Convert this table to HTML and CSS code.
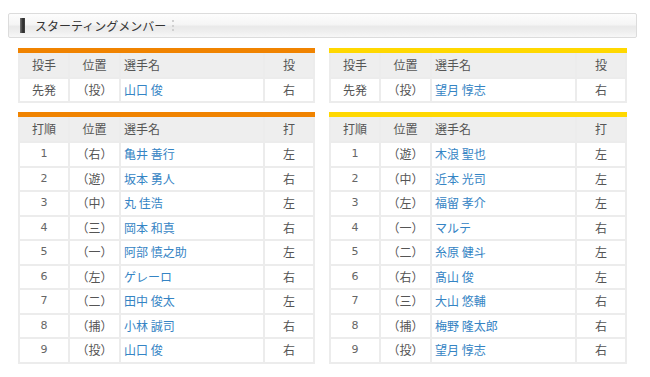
FILE: index.html
```
<!DOCTYPE html>
<html lang="ja">
<head>
<meta charset="utf-8">
<link rel="stylesheet" href="styles.css">
</head>
<body>
<div class="title-bar"><span class="mark"></span><span class="title">スターティングメンバー</span><span class="sep"></span></div>
<div class="grid">
  <table class="tbl orange">
    <tr><th class="c1">投手</th><th class="c2">位置</th><th class="c3">選手名</th><th class="c4">投</th></tr>
    <tr><td>先発</td><td>（投）</td><td class="nm">山口 俊</td><td>右</td></tr>
  </table>
  <table class="tbl yellow">
    <tr><th class="c1">投手</th><th class="c2">位置</th><th class="c3">選手名</th><th class="c4">投</th></tr>
    <tr><td>先発</td><td>（投）</td><td class="nm">望月 惇志</td><td>右</td></tr>
  </table>
  <table class="tbl orange lineup">
    <tr><th class="c1">打順</th><th class="c2">位置</th><th class="c3">選手名</th><th class="c4">打</th></tr>
    <tr><td class="num">1</td><td>（右）</td><td class="nm">亀井 善行</td><td>左</td></tr>
    <tr><td class="num">2</td><td>（遊）</td><td class="nm">坂本 勇人</td><td>右</td></tr>
    <tr><td class="num">3</td><td>（中）</td><td class="nm">丸 佳浩</td><td>左</td></tr>
    <tr><td class="num">4</td><td>（三）</td><td class="nm">岡本 和真</td><td>右</td></tr>
    <tr><td class="num">5</td><td>（一）</td><td class="nm">阿部 慎之助</td><td>左</td></tr>
    <tr><td class="num">6</td><td>（左）</td><td class="nm">ゲレーロ</td><td>右</td></tr>
    <tr><td class="num">7</td><td>（二）</td><td class="nm">田中 俊太</td><td>左</td></tr>
    <tr><td class="num">8</td><td>（捕）</td><td class="nm">小林 誠司</td><td>右</td></tr>
    <tr><td class="num">9</td><td>（投）</td><td class="nm">山口 俊</td><td>右</td></tr>
  </table>
  <table class="tbl yellow lineup">
    <tr><th class="c1">打順</th><th class="c2">位置</th><th class="c3">選手名</th><th class="c4">打</th></tr>
    <tr><td class="num">1</td><td>（遊）</td><td class="nm">木浪 聖也</td><td>左</td></tr>
    <tr><td class="num">2</td><td>（中）</td><td class="nm">近本 光司</td><td>左</td></tr>
    <tr><td class="num">3</td><td>（左）</td><td class="nm">福留 孝介</td><td>左</td></tr>
    <tr><td class="num">4</td><td>（一）</td><td class="nm">マルテ</td><td>右</td></tr>
    <tr><td class="num">5</td><td>（二）</td><td class="nm">糸原 健斗</td><td>左</td></tr>
    <tr><td class="num">6</td><td>（右）</td><td class="nm">髙山 俊</td><td>左</td></tr>
    <tr><td class="num">7</td><td>（三）</td><td class="nm">大山 悠輔</td><td>右</td></tr>
    <tr><td class="num">8</td><td>（捕）</td><td class="nm">梅野 隆太郎</td><td>右</td></tr>
    <tr><td class="num">9</td><td>（投）</td><td class="nm">望月 惇志</td><td>右</td></tr>
  </table>
</div>
</body>
</html>
```

FILE: styles.css
```
html, body { background: #fff; }
body {
  margin: 13px 13px 0 8px;
  font-family: "Noto Sans CJK JP", "DejaVu Sans", sans-serif;
  font-size: 12px;
  color: #444;
}
.title-bar {
  height: 23px;
  border: 1px solid #dcdcdc;
  border-radius: 2px;
  background: linear-gradient(to bottom, #fdfdfd 0%, #f5f5f5 45%, #e9e9e9 55%, #eeeeee 75%, #f7f7f7 100%);
  display: flex;
  align-items: center;
  padding-left: 11px;
}
.mark {
  width: 5px;
  height: 15px;
  background: linear-gradient(to right, #777, #2a2a2a 60%, #444);
  margin-right: 10px;
}
.title {
  color: #333;
  font-size: 12px;
}
.sep {
  width: 0;
  height: 11px;
  border-left: 2px dotted #d0d0d0;
  margin-left: 6px;
}
.grid {
  display: grid;
  grid-template-columns: 297px 298px;
  column-gap: 14px;
  row-gap: 9px;
  margin: 10px 0 0 10px;
}
.tbl {
  border-collapse: collapse;
  width: 100%;
  table-layout: fixed;
}
.tbl.orange { border-top: 5px solid #f08300; }
.tbl.yellow { border-top: 5px solid #ffd800; }
.tbl th, .tbl td {
  border: 2px solid #ececec;
  text-align: center;
  padding: 0;
  font-weight: normal;
  height: 22px;
  line-height: 20px;
}
.tbl.orange th, .tbl.yellow th { border-top: 0; }
.tbl th {
  background: #eeeeee;
  color: #555;
  height: 24px;
}
.tbl th.c3 { text-align: left; padding-left: 3px; }
.c1 { width: 48px; }
.c2 { width: 49px; }
.c4 { width: 48px; }
.tbl td { color: #555; }
.tbl td.nm { text-align: left; padding-left: 3px; color: #3584c4; }
.tbl td.num { font-family: "DejaVu Sans", sans-serif; font-size: 11px; color: #666; }
.lineup td { height: 22.5px; }
```
